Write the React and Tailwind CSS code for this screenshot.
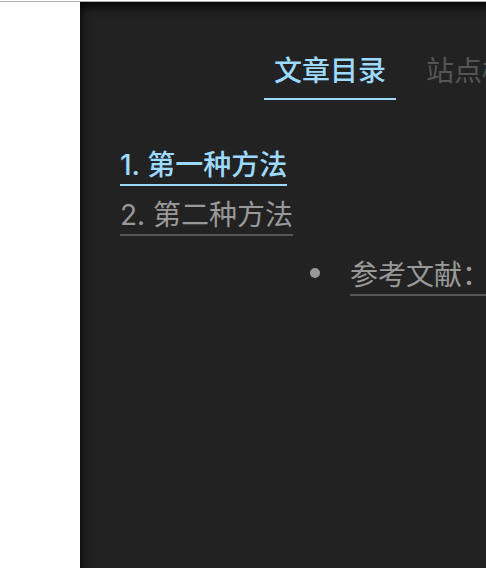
const tabs = [
  { label: '文章目录', active: true },
  { label: '站点概览', active: false },
];

const sections = [
  { number: '1.', title: '第一种方法', href: '#first', active: true },
  { number: '2.', title: '第二种方法', href: '#second', active: false },
];

export default function App() {
  return (
    <div className="h-screen overflow-hidden bg-white font-[Inter,'Noto_Sans_CJK_SC',sans-serif] text-[28px]">
      <div className="mt-px border-t border-[#adb1b2] pl-20">
        <aside className="-mr-5 min-h-[calc(100vh+20px)] bg-[#222] pl-10 pt-12 text-[#999] shadow-[inset_0_4px_12px_#000]">
          <nav className="ml-36 flex gap-5 whitespace-nowrap">
            {tabs.map((tab) => (
              <button
                key={tab.label}
                type="button"
                className={
                  tab.active
                    ? 'shrink-0 border-b-2 border-[#9cdaff] px-2.5 pb-1.5 leading-[42px] font-medium text-[#9cdaff]'
                    : 'shrink-0 border-b-2 border-transparent px-2.5 pb-1.5 leading-[42px] text-[#555]'
                }
              >
                {tab.label}
              </button>
            ))}
          </nav>
          <ol className="mt-[46px] flex flex-col items-start gap-2.5 whitespace-nowrap">
            {sections.map((section) => (
              <li key={section.href} className="flex">
                <a
                  href={section.href}
                  className={
                    section.active
                      ? 'border-b-2 border-[#9cdaff] leading-[38px] font-medium text-[#9cdaff]'
                      : 'border-b-2 border-[#555] leading-[38px]'
                  }
                >
                  {section.number} {section.title}
                </a>
              </li>
            ))}
          </ol>
          <ul className="mt-5 ml-[190px] whitespace-nowrap">
            <li className="flex items-start gap-[30px]">
              <span className="mt-3 size-2.5 shrink-0 rounded-full bg-[#999]" />
              <a href="#references" className="shrink-0 border-b-2 border-[#555] leading-[38px]">
                参考文献：
              </a>
            </li>
          </ul>
        </aside>
      </div>
    </div>
  );
}
